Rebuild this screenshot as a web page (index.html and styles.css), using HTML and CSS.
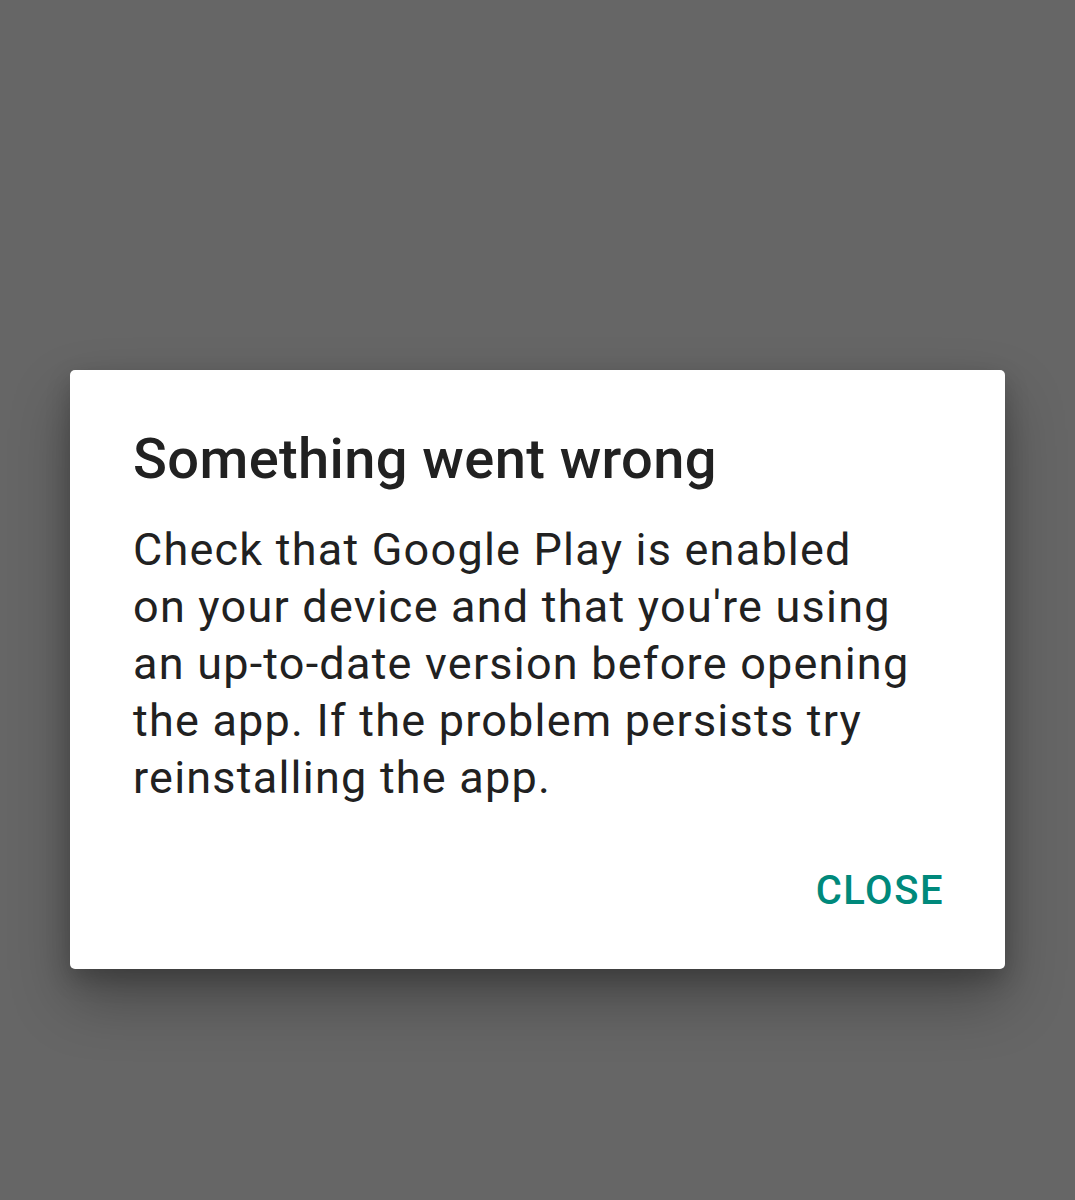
FILE: index.html
```html
<!DOCTYPE html>
<html>
<head>
<meta charset="utf-8">
<link rel="stylesheet" href="styles.css">
</head>
<body>
<div class="screen">
  <div class="dialog">
    <h1 class="title">Something went wrong</h1>
    <p class="message">Check that Google Play is enabled<br>on your device and that you're using<br>an up-to-date version before opening<br>the app. If the problem persists try<br>reinstalling the app.</p>
    <div class="actions">
      <span class="btn">CLOSE</span>
    </div>
  </div>
</div>
</body>
</html>
```
FILE: styles.css
```css
html, body {
  margin: 0;
  padding: 0;
  background: #666666;
}
.screen {
  width: 1075px;
  height: 1200px;
  display: flex;
  flex-direction: column;
  align-items: flex-start;
  padding: 370px 0 0 70px;
  box-sizing: border-box;
  font-family: Roboto, "Noto Sans", sans-serif;
}
.dialog {
  width: 935px;
  height: 599px;
  box-sizing: border-box;
  background: #ffffff;
  border-radius: 5px;
  box-shadow: 0 30px 60px rgba(0,0,0,0.3), 0 10px 24px rgba(0,0,0,0.2);
  padding: 56px 62px 0 63px;
  display: flex;
  flex-direction: column;
}
.title {
  margin: 0;
  font-size: 56px;
  font-weight: 500;
  line-height: 66px;
  letter-spacing: 0.4px;
  color: #212121;
}
.message {
  margin: 29px 0 0;
  font-size: 45px;
  font-weight: 400;
  line-height: 57px;
  letter-spacing: 1.22px;
  color: #212121;
  white-space: nowrap;
}
.actions {
  display: flex;
  justify-content: flex-end;
  margin-top: 61px;
}
.btn {
  font-size: 40px;
  font-weight: 500;
  line-height: 48px;
  color: #00897b;
  letter-spacing: 1.5px;
  margin-right: -1px;
}
```
